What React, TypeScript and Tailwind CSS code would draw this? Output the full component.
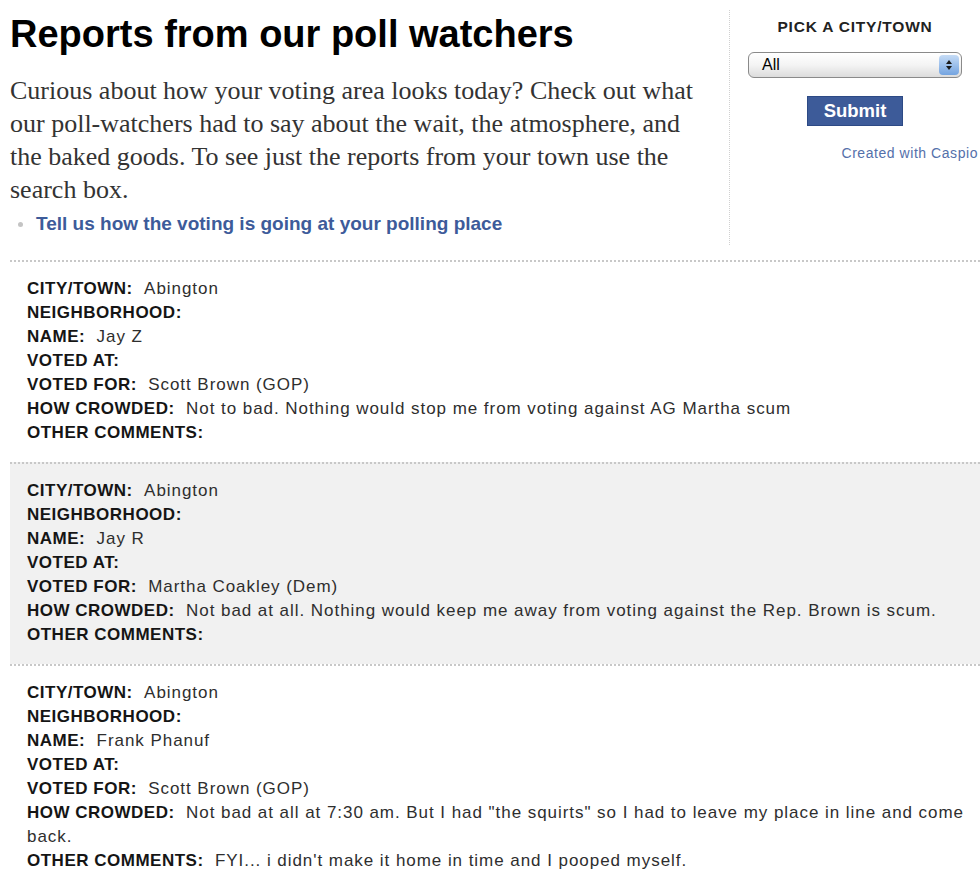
import React from "react";

type Rec = { city: string; hood: string; name: string; at: string; forr: string; crowd: string; other: string };

const records: Rec[] = [
  { city: "Abington", hood: "", name: "Jay Z", at: "", forr: "Scott Brown (GOP)", crowd: "Not to bad. Nothing would stop me from voting against AG Martha scum", other: "" },
  { city: "Abington", hood: "", name: "Jay R", at: "", forr: "Martha Coakley (Dem)", crowd: "Not bad at all. Nothing would keep me away from voting against the Rep. Brown is scum.", other: "" },
  { city: "Abington", hood: "", name: "Frank Phanuf", at: "", forr: "Scott Brown (GOP)", crowd: "Not bad at all at 7:30 am. But I had \"the squirts\" so I had to leave my place in line and come back.", other: "FYI... i didn't make it home in time and I pooped myself." },
];

function Row({ label, value }: { label: string; value: string }) {
  return (
    <div className="leading-[24px]">
      <span className="font-bold text-[#151515] tracking-[0.5px]">{label}:</span>
      {value ? <span className="text-[#2e2e2e] tracking-[0.95px]">{"\u00a0\u00a0" + value}</span> : null}
    </div>
  );
}

function Record({ r, shaded }: { r: Rec; shaded: boolean }) {
  return (
    <div className={(shaded ? "bg-[#f1f1f1] " : "") + "border-t-2 border-dotted border-[#c8c8c8] pl-[17px] pr-[4px] pt-[15px] pb-[17px]"}>
      <Row label="CITY/TOWN" value={r.city} />
      <Row label="NEIGHBORHOOD" value={r.hood} />
      <Row label="NAME" value={r.name} />
      <Row label="VOTED AT" value={r.at} />
      <Row label="VOTED FOR" value={r.forr} />
      <Row label="HOW CROWDED" value={r.crowd} />
      <Row label="OTHER COMMENTS" value={r.other} />
    </div>
  );
}

export default function App() {
  return (
    <div className="w-[980px] h-[871px] overflow-hidden bg-white pl-[10px]" style={{ fontFamily: '"Liberation Sans", Arial, sans-serif' }}>
      <div className="flex items-start">
        <div className="w-[720px] mt-[10px] border-r border-dotted border-[#d0d0d0] pt-[2px] pb-[9px] pr-[20px]">
          <h1 className="text-[38px] font-bold leading-[44px] text-black">Reports from our poll watchers</h1>
          <p className="mt-[18px] text-[26px] leading-[33px] text-[#333]" style={{ fontFamily: '"Liberation Serif", "Times New Roman", serif' }}>
            Curious about how your voting area looks today? Check out what our poll-watchers had to say about the wait, the atmosphere, and the baked goods. To see just the reports from your town use the search box.
          </p>
          <div className="mt-[6px] flex items-center text-[19px] leading-[24px]">
            <span className="ml-[8px] mr-[13px] w-[5px] h-[5px] rounded-full bg-[#c4c4c4]" />
            <span className="font-bold text-[#3d5b9a]">Tell us how the voting is going at your polling place</span>
          </div>
        </div>
        <div className="flex-1 flex flex-col items-center mt-[10px] pt-[8px]">
          <div className="text-[15.5px] font-bold text-[#222] leading-[18px] tracking-[0.8px]">PICK A CITY/TOWN</div>
          <div className="mt-[16px] w-[214px] h-[26px] rounded-[6px] border border-[#8a8a8a] bg-gradient-to-b from-white via-[#f4f4f4] to-[#dcdcdc] flex items-center justify-between">
            <span className="pl-[13px] text-[16px] text-black">All</span>
            <span className="mr-[2px] w-[20px] h-[20px] rounded-[4px] bg-gradient-to-b from-[#c6dcf6] to-[#74a4e0] flex items-center justify-center">
              <svg width="8" height="12" viewBox="0 0 8 12"><path d="M4 1 L7 5 H1 Z M4 11 L1 7 H7 Z" fill="#1a1a1a" /></svg>
            </span>
          </div>
          <button className="mt-[18px] w-[96px] h-[30px] bg-[#3d5b99] border border-[#2d4a85] text-white font-bold text-[18.5px] leading-[28px]">Submit</button>
          <div className="mt-[19px] self-end mr-[2px] text-[14px] text-[#5470aa] leading-[16px] tracking-[0.55px] whitespace-nowrap">Created with Caspio</div>
        </div>
      </div>
      <div className="mt-[15px] text-[17px] text-[#1a1a1a]">
        {records.map((r, i) => (
          <Record key={i} r={r} shaded={i === 1} />
        ))}
      </div>
    </div>
  );
}
